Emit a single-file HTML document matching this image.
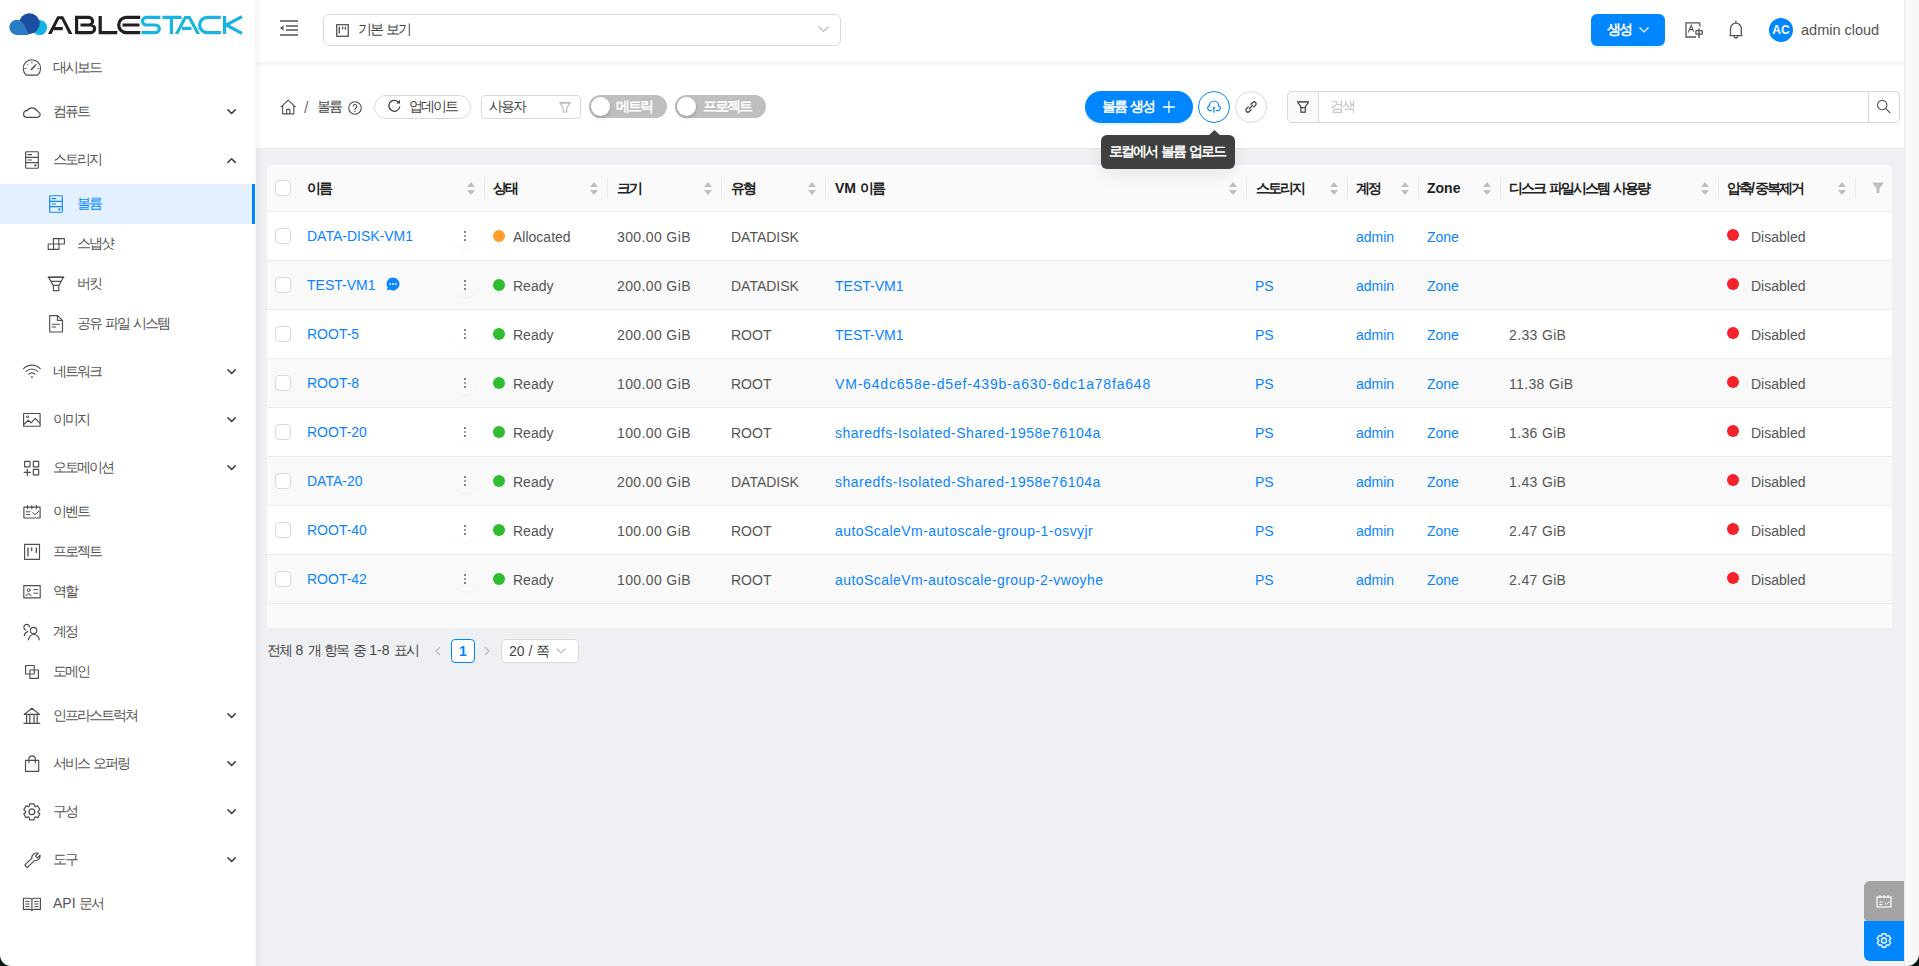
<!DOCTYPE html><html><head><meta charset="utf-8"><title>ABLESTACK</title><style>
*{box-sizing:border-box;margin:0;padding:0}
html,body{width:1919px;height:966px;overflow:hidden;background:#eff0f4;font-family:"Liberation Sans",sans-serif;font-size:14px;color:#333}
.a{position:absolute}
svg{display:block;position:absolute;overflow:visible}
.t{position:absolute;white-space:nowrap;line-height:16px}
.k{font-size:14px;letter-spacing:-2px}
</style></head><body>
<div class="a" style="left:0px;top:0px;width:256px;height:966px;background:#fff"></div>
<div class="a" style="left:256px;top:0px;width:1648px;height:62px;background:#fff"></div>
<div class="a" style="left:256px;top:62px;width:1648px;height:86px;background:#fff"></div>
<div class="a" style="left:256px;top:62px;width:1648px;height:6px;background:linear-gradient(rgba(0,10,30,.045),rgba(0,10,30,0))"></div>
<div class="a" style="left:255px;top:0px;width:8px;height:966px;background:linear-gradient(90deg,rgba(0,10,30,.04),rgba(0,10,30,0))"></div>
<div class="a" style="left:1904px;top:0px;width:15px;height:966px;background:#f8f8f8;border-left:1px solid #e8e8e8"></div>
<svg style="left:0px;top:0px" width="256" height="48" viewBox="0 0 256 48"><circle cx="39.6" cy="27.6" r="7.5" fill="#14b2e2"/><circle cx="29.4" cy="23.6" r="10.3" fill="#1d4d9e"/><path d="M16.5 35 A7.6 7.6 0 1 1 19.3 20.2 Q25.8 24.5 28.6 35 Z" fill="#2a7cc4"/><g fill="none" stroke="#231f20" stroke-width="3.2" stroke-linejoin="miter"><path d="M48 34 L57.3 16.2 H63.2 L72.4 34 H68.9 L61.4 19.3 H59.1 L51.5 34Z" fill="#231f20" stroke="none"/><path d="M54 28.6 H62.8"/><path d="M76.6 34 V17.4 H88.8 A3.8 3.8 0 0 1 88.8 25 H80.5 M76.6 32.6 H90.8 A3.8 3.8 0 0 0 90.8 25 H88"/><path d="M100.2 16 V32.6 H117.3"/><path d="M140.2 17.4 H126.3 A7.6 7.6 0 0 0 126.3 32.6 H140.2 M122.5 25 H139.5"/></g><g fill="none" stroke="#15b4e2" stroke-width="3.2" stroke-linejoin="miter"><path d="M160.4 17.4 H146.3 A3.8 3.8 0 0 0 146.3 25 H155.5 A3.8 3.8 0 0 1 155.5 32.6 H141.5"/><path d="M162.5 17.4 H181.5 M171.4 17.4 V34"/><path d="M174.8 34 L184.4 16 H190.3 L200 34 H196.5 L188.5 19.1 H186.2 L178.3 34Z" fill="#15b4e2" stroke="none"/><path d="M182 28.4 H191.5"/><path d="M220.8 17.4 H207.2 A7.6 7.6 0 0 0 207.2 32.6 H220.8"/><path d="M224.6 16 V34 M242 16.6 L226.2 25 L242 33.4"/></g></svg>
<div class="a" style="left:0px;top:184px;width:255px;height:40px;background:#e3f1ff"></div>
<div class="a" style="left:252px;top:184px;width:3px;height:40px;background:#0087ff"></div>
<div class="t " style="left:53px;top:59px;color:#555"><span class="k">대시보드</span></div>
<div class="t " style="left:53px;top:103px;color:#555"><span class="k">컴퓨트</span></div>
<svg style="left:227px;top:108.5px;" width="10" height="6" viewBox="0 0 10 6"><path d="M1 0.9 L4.6 4.5 L8.2 0.9" fill="none" stroke="#444" stroke-width="1.6" stroke-linecap="round" stroke-linejoin="round"/></svg>
<div class="t " style="left:53px;top:151px;color:#555"><span class="k">스토리지</span></div>
<svg style="left:227px;top:158px;" width="10" height="6" viewBox="0 0 10 6"><path d="M1 4.4 L4.6 0.8 L8.2 4.4" fill="none" stroke="#444" stroke-width="1.6" stroke-linecap="round" stroke-linejoin="round"/></svg>
<div class="t " style="left:77px;top:195px;color:#0087ff"><span class="k">볼륨</span></div>
<div class="t " style="left:77px;top:235px;color:#555"><span class="k">스냅샷</span></div>
<div class="t " style="left:77px;top:275px;color:#555"><span class="k">버킷</span></div>
<div class="t " style="left:77px;top:315px;color:#555"><span class="k">공유</span> <span class="k">파일</span> <span class="k">시스템</span></div>
<div class="t " style="left:53px;top:363px;color:#555"><span class="k">네트워크</span></div>
<svg style="left:227px;top:368.5px;" width="10" height="6" viewBox="0 0 10 6"><path d="M1 0.9 L4.6 4.5 L8.2 0.9" fill="none" stroke="#444" stroke-width="1.6" stroke-linecap="round" stroke-linejoin="round"/></svg>
<div class="t " style="left:53px;top:411px;color:#555"><span class="k">이미지</span></div>
<svg style="left:227px;top:416.5px;" width="10" height="6" viewBox="0 0 10 6"><path d="M1 0.9 L4.6 4.5 L8.2 0.9" fill="none" stroke="#444" stroke-width="1.6" stroke-linecap="round" stroke-linejoin="round"/></svg>
<div class="t " style="left:53px;top:459px;color:#555"><span class="k">오토메이션</span></div>
<svg style="left:227px;top:464.5px;" width="10" height="6" viewBox="0 0 10 6"><path d="M1 0.9 L4.6 4.5 L8.2 0.9" fill="none" stroke="#444" stroke-width="1.6" stroke-linecap="round" stroke-linejoin="round"/></svg>
<div class="t " style="left:53px;top:503px;color:#555"><span class="k">이벤트</span></div>
<div class="t " style="left:53px;top:543px;color:#555"><span class="k">프로젝트</span></div>
<div class="t " style="left:53px;top:583px;color:#555"><span class="k">역할</span></div>
<div class="t " style="left:53px;top:623px;color:#555"><span class="k">계정</span></div>
<div class="t " style="left:53px;top:663px;color:#555"><span class="k">도메인</span></div>
<div class="t " style="left:53px;top:707px;color:#555"><span class="k">인프라스트럭쳐</span></div>
<svg style="left:227px;top:712.5px;" width="10" height="6" viewBox="0 0 10 6"><path d="M1 0.9 L4.6 4.5 L8.2 0.9" fill="none" stroke="#444" stroke-width="1.6" stroke-linecap="round" stroke-linejoin="round"/></svg>
<div class="t " style="left:53px;top:755px;color:#555"><span class="k">서비스</span> <span class="k">오퍼링</span></div>
<svg style="left:227px;top:760.5px;" width="10" height="6" viewBox="0 0 10 6"><path d="M1 0.9 L4.6 4.5 L8.2 0.9" fill="none" stroke="#444" stroke-width="1.6" stroke-linecap="round" stroke-linejoin="round"/></svg>
<div class="t " style="left:53px;top:803px;color:#555"><span class="k">구성</span></div>
<svg style="left:227px;top:808.5px;" width="10" height="6" viewBox="0 0 10 6"><path d="M1 0.9 L4.6 4.5 L8.2 0.9" fill="none" stroke="#444" stroke-width="1.6" stroke-linecap="round" stroke-linejoin="round"/></svg>
<div class="t " style="left:53px;top:851px;color:#555"><span class="k">도구</span></div>
<svg style="left:227px;top:856.5px;" width="10" height="6" viewBox="0 0 10 6"><path d="M1 0.9 L4.6 4.5 L8.2 0.9" fill="none" stroke="#444" stroke-width="1.6" stroke-linecap="round" stroke-linejoin="round"/></svg>
<div class="t " style="left:53px;top:895px;color:#555">API <span class="k">문서</span></div>
<svg style="left:0;top:0" width="256" height="966" viewBox="0 0 256 966">
<g fill="none" stroke="#4d4d4d" stroke-width="1.15" stroke-linecap="round" stroke-linejoin="round">
 <!-- dashboard -->
 <path d="M26.3 75.1 A8.7 8.7 0 1 1 37.5 75.1 Z"/>
 <path d="M31.4 69.4 L35.4 65.3" stroke-width="1.5"/>
 <path d="M31.9 61.9 V63.1 M27.2 64.1 L28 64.9 M24.8 68.6 H26 M36.6 64.1 L35.8 64.9 M39 68.6 H37.8" stroke-width="0.9"/>
 <!-- cloud -->
 <path d="M26.2 117.3 H37.8 A2.8 2.8 0 0 0 38.6 112 A3.2 3.2 0 0 0 36.9 110.6 A5.6 5.6 0 0 0 27.2 110.6 A3.4 3.4 0 0 0 26.2 117.3 Z" stroke-width="1.2"/>
 <!-- storage -->
 <rect x="25.7" y="151.7" width="12.6" height="16.5" rx="0.6"/>
 <path d="M25.7 157.3 H38.3 M25.7 162.6 H38.3 M28 154.6 H31.6 M28 160 H31.6" />
 <circle cx="35.4" cy="165.4" r="0.55" fill="#4d4d4d"/>
 <!-- snapshot -->
 <path d="M48.2 244 H59 V249.4 H48.2 Z M53.6 244 V249.4 M53.4 244 V238.6 H64.4 V244 H59 M58.8 238.6 V244" stroke-width="1.1"/>
 <!-- bucket -->
 <path d="M48.4 277.2 H63.6 M48.8 277.6 L53.2 285.4 H59 L63.2 277.6 M50.8 281.4 H61.2 M53.4 285.4 V290.6 H58.8 V285.4" stroke-width="1.15"/>
 <path d="M48.4 277.2 H63.6" stroke-width="1.5"/>
 <!-- file -->
 <path d="M49.7 315.6 H57.6 L62.5 320.4 V332 H49.7 Z M57.4 315.8 V320.4 H62.4 M52.2 324.2 H59.6 M52.2 327 H55.6" stroke-width="1.15"/>
 <!-- wifi -->
 <path d="M23.6 368.6 A11.8 11.8 0 0 1 40.2 368.6 M26.2 371.4 A8 8 0 0 1 37.6 371.4 M28.8 374.2 A4.3 4.3 0 0 1 35 374.2" stroke-width="1.2"/>
 <circle cx="31.9" cy="377.1" r="0.95" fill="#4d4d4d" stroke="none"/>
 <!-- picture -->
 <rect x="23.6" y="413.5" width="16.5" height="12.7"/>
 <path d="M24 424.2 L28.4 420.2 L31 422.8 L35.2 418.4 L39.8 423.2" />
 <circle cx="27.5" cy="416.9" r="1" stroke-width="0.9"/>
 <!-- automation -->
 <rect x="24.6" y="461.4" width="5.4" height="5.4"/><rect x="33.3" y="461.4" width="5.4" height="5.4"/><rect x="33.3" y="469.4" width="5.4" height="5.4"/>
 <path d="M27.3 469.3 V475.3 M24.2 472.3 H30.4" stroke-width="1.3"/>
 <!-- event -->
 <rect x="23.9" y="507.1" width="16.2" height="10.9"/>
 <path d="M27.5 505.6 V508.6 M31.8 505.6 V508.6 M36.4 505.6 V508.6" stroke-width="1.2"/>
 <path d="M26.4 511.8 H30 M26.4 514.6 H30 M32.8 512.6 L34.9 514.8 L39 511.2" stroke-width="1"/>
 <!-- project -->
 <rect x="24.6" y="544.4" width="14.9" height="14.9"/>
 <path d="M28 547.8 V556 M31.7 547.8 V550.6 M36.3 547.8 V552.4" stroke-width="1.3"/>
 <!-- idcard -->
 <rect x="23.8" y="585.6" width="16.4" height="12.2"/>
 <circle cx="28.6" cy="590.2" r="1.5" stroke-width="1"/>
 <path d="M26 595.8 A2.7 2.7 0 0 1 31.2 595.8 M33.8 589.6 H37.6 M33.8 593.2 H37.6" stroke-width="1"/>
 <!-- team -->
 <circle cx="33.6" cy="630.6" r="3.2"/>
 <path d="M28.6 639.8 A5.2 5.2 0 0 1 39.2 639.8 M29.6 626.8 A2.9 2.9 0 1 0 25.6 630 M24.3 635.6 A4.8 4.8 0 0 1 27.6 631.6" stroke-width="1.2"/>
 <!-- domain -->
 <rect x="25.6" y="665.5" width="8.6" height="8.5"/>
 <rect x="29.9" y="670" width="8.5" height="8.4" />
 <!-- bank -->
 <path d="M24.2 714.4 L31.9 708.2 L39.6 714.4 Z M24 723.4 H39.8 M26.6 715.3 V722.6 M29.8 715.3 V722.6 M34 715.3 V722.6 M37.2 715.3 V722.6" stroke-width="1.2"/>
 <!-- shop -->
 <rect x="25.5" y="760.4" width="13.2" height="10.9"/>
 <path d="M28.9 763 V759 A3.2 3.2 0 0 1 35.3 759 V763" stroke-width="1.15"/>
 <!-- setting -->
 <path d="M34.57 817.37 L33.98 819.82 L29.72 819.82 L29.13 817.37 L28.39 816.94 L25.97 817.66 L23.84 813.96 L25.66 812.22 L25.66 811.38 L23.84 809.64 L25.97 805.94 L28.39 806.66 L29.13 806.23 L29.72 803.78 L33.98 803.78 L34.57 806.23 L35.31 806.66 L37.73 805.94 L39.86 809.64 L38.04 811.38 L38.04 812.22 L39.86 813.96 L37.73 817.66 L35.31 816.94 Z" stroke-width="1.2"/>
 <circle cx="31.85" cy="811.8" r="2.9" stroke-width="1.2"/>
 <!-- tool -->
 <path d="M24.8 865.2 L31.9 858.1 A4.6 4.6 0 0 1 38.2 853.4 L35.6 856 L37.4 857.8 L40 855.2 A4.6 4.6 0 0 1 34.4 860.6 L27.2 867.6 Z" stroke-width="1.15"/>
 <!-- read -->
 <path d="M23.4 898.2 H30.2 L31.9 899.4 L33.6 898.2 H40.4 V909.4 H33.6 L31.9 910.6 L30.2 909.4 H23.4 Z M31.9 899.4 V910" stroke-width="1.15"/>
 <path d="M25.6 901.4 H29.2 M25.6 904 H29.2 M25.6 906.6 H29.2 M34.6 901.4 H38.2 M34.6 904 H38.2 M34.6 906.6 H38.2" stroke-width="1"/>
</g>
<g fill="none" stroke="#1787f5" stroke-width="1.15" stroke-linecap="round" stroke-linejoin="round">
 <rect x="49.7" y="195.7" width="12.6" height="16.5" rx="0.6"/>
 <path d="M49.7 201.3 H62.3 M49.7 206.6 H62.3 M52 198.6 H55.6 M52 204 H55.6" />
 <circle cx="59.4" cy="209.4" r="0.55" fill="#1787f5"/>
</g>
</svg>
<svg style="left:280px;top:20px;" width="18" height="16" viewBox="0 0 18 16"><path d="M0 1h18M6 6h12M6 10h12M0 15h18" stroke="#555" stroke-width="1.7"/><path d="M0 8 L3.5 5.3 V10.7Z" fill="#555"/></svg>
<div class="a" style="left:323px;top:14px;width:518px;height:32px;background:#fff;border:1px solid #d9d9d9;border-radius:6px"></div>
<svg style="left:336px;top:24px;" width="13" height="13" viewBox="0 0 13 13"><rect x="0.7" y="0.7" width="11.6" height="11.6" fill="none" stroke="#555" stroke-width="1.3"/><path d="M3.3 2.8v6.8M6.6 2.8v2.4M9.4 2.8v3" stroke="#555" stroke-width="1.4"/></svg>
<div class="t " style="left:358px;top:21px;color:#444"><span class="k">기본</span> <span class="k">보기</span></div>
<svg style="left:818px;top:26px;" width="11" height="7" viewBox="0 0 11 7"><path d="M0.5 0.5 L5.5 5.5 L10.5 0.5" fill="none" stroke="#bbb" stroke-width="1.1"/></svg>
<div class="a" style="left:1591px;top:14px;width:74px;height:32px;background:#0087ff;border-radius:6px;box-shadow:0 2px 0 rgba(5,145,255,.1)"></div>
<div class="t " style="left:1607px;top:21px;color:#fff;font-weight:bold"><span class="k">생성</span></div>
<svg style="left:1639px;top:27px;" width="10" height="6" viewBox="0 0 10 6"><path d="M0.5 0.5 L5 5 L9.5 0.5" fill="none" stroke="#fff" stroke-width="1.2"/></svg>
<svg style="left:1680px;top:16px;" width="30" height="28" viewBox="0 0 30 28"><path d="M19.9 10.6 V7.4 Q19.9 6.9 19.4 6.9 H6 V21 H16" fill="none" stroke="#555" stroke-width="1.3"/><path d="M8.4 16.4 L11.2 9.2 L13.5 15.6 M9.6 13.6 H13" fill="none" stroke="#555" stroke-width="1.1"/><rect x="15.9" y="14.6" width="6.5" height="3.6" rx="0.6" fill="none" stroke="#555" stroke-width="1.3"/><path d="M19 12.4 V21.9" stroke="#555" stroke-width="1.4"/></svg>
<svg style="left:1720px;top:16px;" width="30" height="28" viewBox="0 0 30 28"><path d="M15.9 4.8 V7 M10.5 19.6 V12.6 A5.4 5.4 0 0 1 21.3 12.6 V19.6 M9.4 19.7 H22.5 M14.1 20.2 A1.8 1.8 0 0 0 17.7 20.2" fill="none" stroke="#555" stroke-width="1.3"/></svg>
<div class="a" style="left:1769px;top:18px;width:24px;height:24px;background:#0087ff;border-radius:50%"></div>
<div class="t " style="left:1769px;top:22px;color:#fff;font-size:12px;width:24px;text-align:center;font-weight:bold">AC</div>
<div class="t " style="left:1801px;top:22px;color:#555;font-size:14.5px">admin cloud</div>
<svg style="left:280px;top:99px;" width="17" height="16" viewBox="0 0 17 16"><path d="M0.8 8.2 L8.2 1.2 L15.6 8.2 M2.6 6.6V14.9h11.2V6.6 M6.6 14.8V10.3h3.2V14.8" fill="none" stroke="#555" stroke-width="1.15" stroke-linejoin="round"/></svg>
<div class="t " style="left:304px;top:99px;color:#777;font-size:16px;line-height:18px">/</div>
<div class="t " style="left:317px;top:98px;color:#444"><span class="k">볼륨</span></div>
<svg style="left:348px;top:101px;" width="14" height="14" viewBox="0 0 14 14"><circle cx="7" cy="7" r="6.3" fill="none" stroke="#444" stroke-width="1.05"/><path d="M5.1 5.4a1.9 1.9 0 1 1 2.5 1.8c-.45.2-.6.5-.6 1v.6" fill="none" stroke="#444" stroke-width="1.05"/><circle cx="7" cy="10.4" r=".6" fill="#444"/></svg>
<div class="a" style="left:374px;top:95px;width:97px;height:24px;background:#fff;border:1px solid #d9d9d9;border-radius:12px"></div>
<svg style="left:388px;top:99px;" width="13" height="14" viewBox="0 0 13 14"><path d="M11.8 7.5 A5.5 5.5 0 1 1 10.3 3" fill="none" stroke="#444" stroke-width="1.3"/><path d="M12 0.8 L12 4.6 L8.2 4.6Z" fill="#444"/></svg>
<div class="t " style="left:409px;top:98px;color:#444"><span class="k">업데이트</span></div>
<div class="a" style="left:481px;top:95px;width:100px;height:24px;background:#fff;border:1px solid #d9d9d9;border-radius:4px"></div>
<div class="t " style="left:489px;top:98px;color:#444"><span class="k">사용자</span></div>
<svg style="left:559px;top:101px;" width="12" height="12" viewBox="0 0 12 12"><path d="M0.8 1.5h10.4L7.7 7.5v3.5H4.3V7.5Z M1.5 2.2h9" fill="none" stroke="#bbb" stroke-width="1.2"/></svg>
<div class="a" style="left:589px;top:95px;width:78px;height:23px;background:#bfbfbf;border-radius:12px"></div>
<div class="a" style="left:591px;top:97px;width:19px;height:19px;background:#fff;border-radius:50%;box-shadow:0 2px 4px rgba(0,35,11,.2)"></div>
<div class="t " style="left:616px;top:98px;color:#fff;font-weight:bold"><span class="k">메트릭</span></div>
<div class="a" style="left:675px;top:95px;width:91px;height:23px;background:#bfbfbf;border-radius:12px"></div>
<div class="a" style="left:677px;top:97px;width:19px;height:19px;background:#fff;border-radius:50%;box-shadow:0 2px 4px rgba(0,35,11,.2)"></div>
<div class="t " style="left:703px;top:98px;color:#fff;font-weight:bold"><span class="k">프로젝트</span></div>
<div class="a" style="left:1085px;top:91px;width:108px;height:32px;background:#0087ff;border-radius:16px;box-shadow:0 2px 0 rgba(5,145,255,.1)"></div>
<div class="t " style="left:1102px;top:98px;color:#fff;font-weight:bold"><span class="k">볼륨</span> <span class="k">생성</span></div>
<svg style="left:1163px;top:101px;" width="12" height="12" viewBox="0 0 12 12"><path d="M6 0v12M0 6h12" stroke="#fff" stroke-width="1.3"/></svg>
<div class="a" style="left:1198px;top:91px;width:32px;height:32px;background:#fff;border:1px solid #0087ff;border-radius:50%"></div>
<svg style="left:1205px;top:99px;" width="18" height="16" viewBox="0 0 18 16"><path d="M6.4 11.6 H4.8 A2.6 2.6 0 0 1 4.4 6.6 A4.6 4.6 0 0 1 13.6 6.6 A2.6 2.6 0 0 1 13.2 11.6 H11.6" fill="none" stroke="#0087ff" stroke-width="1.2" stroke-linecap="round"/><path d="M9 13.8 V8.6" stroke="#0087ff" stroke-width="1.2"/><path d="M7.4 9.6 L9 7.6 L10.6 9.6Z" fill="#0087ff"/></svg>
<div class="a" style="left:1235px;top:91px;width:32px;height:32px;background:#fff;border:1px solid #d9d9d9;border-radius:50%"></div>
<svg style="left:1243px;top:99px;" width="16" height="16" viewBox="0 0 16 16"><g transform="rotate(-45 8 8)" fill="none" stroke="#444" stroke-width="1.25"><path d="M6.2 6 H3.6 A2 2 0 0 0 3.6 10 H6.2 M9.8 6 H12.4 A2 2 0 0 1 12.4 10 H9.8 M5.6 8 H10.4" stroke-linecap="round"/></g></svg>
<div class="a" style="left:1287px;top:91px;width:613px;height:32px;background:#fff;border:1px solid #d9d9d9;border-radius:5px"></div>
<div class="a" style="left:1287px;top:91px;width:32px;height:32px;background:#fafafa;border:1px solid #d9d9d9;border-radius:5px 0 0 5px"></div>
<svg style="left:1296px;top:100px;" width="14" height="14" viewBox="0 0 14 14"><path d="M1.3 1.9 H12.9" stroke="#444" stroke-width="1.5"/><path d="M1.6 2.2 L5.3 7.3 M12.6 2.2 L8.9 7.3" stroke="#444" stroke-width="1.15"/><rect x="4.9" y="7.6" width="4.4" height="4.6" fill="none" stroke="#444" stroke-width="1.2"/></svg>
<div class="t " style="left:1330px;top:98px;color:#bfbfbf"><span class="k">검색</span></div>
<div class="a" style="left:1868px;top:91px;width:32px;height:32px;background:#fff;border:1px solid #d9d9d9;border-radius:0 5px 5px 0"></div>
<svg style="left:1877px;top:99px;" width="14" height="14" viewBox="0 0 14 14"><circle cx="5.2" cy="6" r="4.7" fill="none" stroke="#555" stroke-width="1.15"/><path d="M8.6 9.4 L13.3 14.1" stroke="#555" stroke-width="1.2"/></svg>
<div class="a" style="left:256px;top:148px;width:1648px;height:1px;background:#e7e8eb"></div>
<div class="a" style="left:267px;top:165px;width:1625px;height:463px;background:#fafafa;border-radius:4px 4px 3px 3px"></div>
<div class="a" style="left:275px;top:180px;width:16px;height:16px;background:#fff;border:1px solid #d9d9d9;border-radius:4px"></div>
<div class="t " style="left:307px;top:180px;color:#222;font-weight:600"><span class="k">이름</span></div>
<svg style="left:467px;top:182px;" width="8" height="13" viewBox="0 0 8 13"><path d="M4 0 L8 5 H0Z M0 8 H8 L4 13Z" fill="#bfbfbf"/></svg>
<div class="a" style="left:484px;top:177px;width:1px;height:22px;background:#ececec"></div>
<div class="t " style="left:493px;top:180px;color:#222;font-weight:600"><span class="k">상태</span></div>
<svg style="left:590px;top:182px;" width="8" height="13" viewBox="0 0 8 13"><path d="M4 0 L8 5 H0Z M0 8 H8 L4 13Z" fill="#bfbfbf"/></svg>
<div class="a" style="left:607px;top:177px;width:1px;height:22px;background:#ececec"></div>
<div class="t " style="left:617px;top:180px;color:#222;font-weight:600"><span class="k">크기</span></div>
<svg style="left:704px;top:182px;" width="8" height="13" viewBox="0 0 8 13"><path d="M4 0 L8 5 H0Z M0 8 H8 L4 13Z" fill="#bfbfbf"/></svg>
<div class="a" style="left:721px;top:177px;width:1px;height:22px;background:#ececec"></div>
<div class="t " style="left:731px;top:180px;color:#222;font-weight:600"><span class="k">유형</span></div>
<svg style="left:808px;top:182px;" width="8" height="13" viewBox="0 0 8 13"><path d="M4 0 L8 5 H0Z M0 8 H8 L4 13Z" fill="#bfbfbf"/></svg>
<div class="a" style="left:825px;top:177px;width:1px;height:22px;background:#ececec"></div>
<div class="t " style="left:835px;top:180px;color:#222;font-weight:bold">VM <span class="k" style="font-weight:600">이름</span></div>
<svg style="left:1229px;top:182px;" width="8" height="13" viewBox="0 0 8 13"><path d="M4 0 L8 5 H0Z M0 8 H8 L4 13Z" fill="#bfbfbf"/></svg>
<div class="a" style="left:1246px;top:177px;width:1px;height:22px;background:#ececec"></div>
<div class="t " style="left:1256px;top:180px;color:#222;font-weight:600"><span class="k">스토리지</span></div>
<svg style="left:1330px;top:182px;" width="8" height="13" viewBox="0 0 8 13"><path d="M4 0 L8 5 H0Z M0 8 H8 L4 13Z" fill="#bfbfbf"/></svg>
<div class="a" style="left:1347px;top:177px;width:1px;height:22px;background:#ececec"></div>
<div class="t " style="left:1356px;top:180px;color:#222;font-weight:600"><span class="k">계정</span></div>
<svg style="left:1401px;top:182px;" width="8" height="13" viewBox="0 0 8 13"><path d="M4 0 L8 5 H0Z M0 8 H8 L4 13Z" fill="#bfbfbf"/></svg>
<div class="a" style="left:1418px;top:177px;width:1px;height:22px;background:#ececec"></div>
<div class="t " style="left:1427px;top:180px;color:#222;font-weight:bold">Zone</div>
<svg style="left:1483px;top:182px;" width="8" height="13" viewBox="0 0 8 13"><path d="M4 0 L8 5 H0Z M0 8 H8 L4 13Z" fill="#bfbfbf"/></svg>
<div class="a" style="left:1500px;top:177px;width:1px;height:22px;background:#ececec"></div>
<div class="t " style="left:1509px;top:180px;color:#222;font-weight:600"><span class="k">디스크</span> <span class="k">파일시스템</span> <span class="k">사용량</span></div>
<svg style="left:1701px;top:182px;" width="8" height="13" viewBox="0 0 8 13"><path d="M4 0 L8 5 H0Z M0 8 H8 L4 13Z" fill="#bfbfbf"/></svg>
<div class="a" style="left:1718px;top:177px;width:1px;height:22px;background:#ececec"></div>
<div class="t " style="left:1727px;top:180px;color:#222;font-weight:600"><span class="k">압축</span>/<span class="k">중복제거</span></div>
<svg style="left:1838px;top:182px;" width="8" height="13" viewBox="0 0 8 13"><path d="M4 0 L8 5 H0Z M0 8 H8 L4 13Z" fill="#bfbfbf"/></svg>
<div class="a" style="left:1855px;top:177px;width:1px;height:22px;background:#ececec"></div>
<svg style="left:1872px;top:182px;" width="12" height="12" viewBox="0 0 12 12"><path d="M0 0.5h12L7.5 6.5v4.5h-3V6.5Z" fill="#bfbfbf"/></svg>
<div class="a" style="left:267px;top:211px;width:1625px;height:1px;background:#ececec"></div>
<div class="a" style="left:267px;top:212px;width:1625px;height:48px;background:#fff"></div>
<div class="a" style="left:267px;top:260px;width:1625px;height:1px;background:#ececec"></div>
<div class="a" style="left:275px;top:228px;width:16px;height:16px;background:#fff;border:1px solid #d9d9d9;border-radius:4px"></div>
<div class="t " style="left:307px;top:227.5px;color:#0a84ff">DATA-DISK-VM1</div>
<div class="a" style="left:453px;top:224px;width:24px;height:24px;border-radius:50%;box-shadow:0 2px 0 rgba(0,0,0,.02)"></div>
<svg style="left:463px;top:231px;" width="4" height="10" viewBox="0 0 4 10"><rect x="1.1" y="0.1" width="1.8" height="1.8" fill="#666"/><rect x="1.1" y="4.1" width="1.8" height="1.8" fill="#8a8a8a"/><rect x="1.1" y="8.1" width="1.8" height="1.8" fill="#666"/></svg>
<div class="a" style="left:493px;top:230px;width:12px;height:12px;background:#ff9f2a;border-radius:50%"></div>
<div class="t " style="left:513px;top:229px;color:#555">Allocated</div>
<div class="t " style="left:617px;top:229px;color:#555;letter-spacing:0.38px">300.00 GiB</div>
<div class="t " style="left:731px;top:229px;color:#555">DATADISK</div>
<div class="t " style="left:1356px;top:229px;color:#0a84ff">admin</div>
<div class="t " style="left:1427px;top:229px;color:#0a84ff">Zone</div>
<div class="a" style="left:1727px;top:229px;width:12px;height:12px;background:#f5222d;border-radius:50%"></div>
<div class="t " style="left:1751px;top:229px;color:#555">Disabled</div>
<div class="a" style="left:267px;top:261px;width:1625px;height:48px;background:#f9f9f9"></div>
<div class="a" style="left:267px;top:309px;width:1625px;height:1px;background:#ececec"></div>
<div class="a" style="left:275px;top:277px;width:16px;height:16px;background:#fff;border:1px solid #d9d9d9;border-radius:4px"></div>
<div class="t " style="left:307px;top:276.5px;color:#0a84ff">TEST-VM1</div>
<svg style="left:386px;top:277px;" width="14" height="14" viewBox="0 0 14 14"><path d="M7 0.5a6.5 6.5 0 1 1 -3.3 12.1 L0.8 13.5 L1.6 10.5 A6.5 6.5 0 0 1 7 0.5z" fill="#0a84ff"/><circle cx="4.2" cy="7" r=".9" fill="#fff"/><circle cx="7" cy="7" r=".9" fill="#fff"/><circle cx="9.8" cy="7" r=".9" fill="#fff"/></svg>
<div class="a" style="left:453px;top:273px;width:24px;height:24px;border-radius:50%;box-shadow:0 2px 0 rgba(0,0,0,.02)"></div>
<svg style="left:463px;top:280px;" width="4" height="10" viewBox="0 0 4 10"><rect x="1.1" y="0.1" width="1.8" height="1.8" fill="#666"/><rect x="1.1" y="4.1" width="1.8" height="1.8" fill="#8a8a8a"/><rect x="1.1" y="8.1" width="1.8" height="1.8" fill="#666"/></svg>
<div class="a" style="left:493px;top:279px;width:12px;height:12px;background:#2ebd2e;border-radius:50%"></div>
<div class="t " style="left:513px;top:278px;color:#555">Ready</div>
<div class="t " style="left:617px;top:278px;color:#555;letter-spacing:0.38px">200.00 GiB</div>
<div class="t " style="left:731px;top:278px;color:#555">DATADISK</div>
<div class="t " style="left:835px;top:278px;color:#0a84ff">TEST-VM1</div>
<div class="t " style="left:1255px;top:278px;color:#0a84ff">PS</div>
<div class="t " style="left:1356px;top:278px;color:#0a84ff">admin</div>
<div class="t " style="left:1427px;top:278px;color:#0a84ff">Zone</div>
<div class="a" style="left:1727px;top:278px;width:12px;height:12px;background:#f5222d;border-radius:50%"></div>
<div class="t " style="left:1751px;top:278px;color:#555">Disabled</div>
<div class="a" style="left:267px;top:310px;width:1625px;height:48px;background:#fff"></div>
<div class="a" style="left:267px;top:358px;width:1625px;height:1px;background:#ececec"></div>
<div class="a" style="left:275px;top:326px;width:16px;height:16px;background:#fff;border:1px solid #d9d9d9;border-radius:4px"></div>
<div class="t " style="left:307px;top:325.5px;color:#0a84ff">ROOT-5</div>
<div class="a" style="left:453px;top:322px;width:24px;height:24px;border-radius:50%;box-shadow:0 2px 0 rgba(0,0,0,.02)"></div>
<svg style="left:463px;top:329px;" width="4" height="10" viewBox="0 0 4 10"><rect x="1.1" y="0.1" width="1.8" height="1.8" fill="#666"/><rect x="1.1" y="4.1" width="1.8" height="1.8" fill="#8a8a8a"/><rect x="1.1" y="8.1" width="1.8" height="1.8" fill="#666"/></svg>
<div class="a" style="left:493px;top:328px;width:12px;height:12px;background:#2ebd2e;border-radius:50%"></div>
<div class="t " style="left:513px;top:327px;color:#555">Ready</div>
<div class="t " style="left:617px;top:327px;color:#555;letter-spacing:0.38px">200.00 GiB</div>
<div class="t " style="left:731px;top:327px;color:#555">ROOT</div>
<div class="t " style="left:835px;top:327px;color:#0a84ff">TEST-VM1</div>
<div class="t " style="left:1255px;top:327px;color:#0a84ff">PS</div>
<div class="t " style="left:1356px;top:327px;color:#0a84ff">admin</div>
<div class="t " style="left:1427px;top:327px;color:#0a84ff">Zone</div>
<div class="t " style="left:1509px;top:327px;color:#555;letter-spacing:0.35px">2.33 GiB</div>
<div class="a" style="left:1727px;top:327px;width:12px;height:12px;background:#f5222d;border-radius:50%"></div>
<div class="t " style="left:1751px;top:327px;color:#555">Disabled</div>
<div class="a" style="left:267px;top:359px;width:1625px;height:48px;background:#f9f9f9"></div>
<div class="a" style="left:267px;top:407px;width:1625px;height:1px;background:#ececec"></div>
<div class="a" style="left:275px;top:375px;width:16px;height:16px;background:#fff;border:1px solid #d9d9d9;border-radius:4px"></div>
<div class="t " style="left:307px;top:374.5px;color:#0a84ff">ROOT-8</div>
<div class="a" style="left:453px;top:371px;width:24px;height:24px;border-radius:50%;box-shadow:0 2px 0 rgba(0,0,0,.02)"></div>
<svg style="left:463px;top:378px;" width="4" height="10" viewBox="0 0 4 10"><rect x="1.1" y="0.1" width="1.8" height="1.8" fill="#666"/><rect x="1.1" y="4.1" width="1.8" height="1.8" fill="#8a8a8a"/><rect x="1.1" y="8.1" width="1.8" height="1.8" fill="#666"/></svg>
<div class="a" style="left:493px;top:377px;width:12px;height:12px;background:#2ebd2e;border-radius:50%"></div>
<div class="t " style="left:513px;top:376px;color:#555">Ready</div>
<div class="t " style="left:617px;top:376px;color:#555;letter-spacing:0.38px">100.00 GiB</div>
<div class="t " style="left:731px;top:376px;color:#555">ROOT</div>
<div class="t " style="left:835px;top:376px;color:#0a84ff;letter-spacing:0.82px">VM-64dc658e-d5ef-439b-a630-6dc1a78fa648</div>
<div class="t " style="left:1255px;top:376px;color:#0a84ff">PS</div>
<div class="t " style="left:1356px;top:376px;color:#0a84ff">admin</div>
<div class="t " style="left:1427px;top:376px;color:#0a84ff">Zone</div>
<div class="t " style="left:1509px;top:376px;color:#555;letter-spacing:0.35px">11.38 GiB</div>
<div class="a" style="left:1727px;top:376px;width:12px;height:12px;background:#f5222d;border-radius:50%"></div>
<div class="t " style="left:1751px;top:376px;color:#555">Disabled</div>
<div class="a" style="left:267px;top:408px;width:1625px;height:48px;background:#fff"></div>
<div class="a" style="left:267px;top:456px;width:1625px;height:1px;background:#ececec"></div>
<div class="a" style="left:275px;top:424px;width:16px;height:16px;background:#fff;border:1px solid #d9d9d9;border-radius:4px"></div>
<div class="t " style="left:307px;top:423.5px;color:#0a84ff">ROOT-20</div>
<div class="a" style="left:453px;top:420px;width:24px;height:24px;border-radius:50%;box-shadow:0 2px 0 rgba(0,0,0,.02)"></div>
<svg style="left:463px;top:427px;" width="4" height="10" viewBox="0 0 4 10"><rect x="1.1" y="0.1" width="1.8" height="1.8" fill="#666"/><rect x="1.1" y="4.1" width="1.8" height="1.8" fill="#8a8a8a"/><rect x="1.1" y="8.1" width="1.8" height="1.8" fill="#666"/></svg>
<div class="a" style="left:493px;top:426px;width:12px;height:12px;background:#2ebd2e;border-radius:50%"></div>
<div class="t " style="left:513px;top:425px;color:#555">Ready</div>
<div class="t " style="left:617px;top:425px;color:#555;letter-spacing:0.38px">100.00 GiB</div>
<div class="t " style="left:731px;top:425px;color:#555">ROOT</div>
<div class="t " style="left:835px;top:425px;color:#0a84ff;letter-spacing:0.51px">sharedfs-Isolated-Shared-1958e76104a</div>
<div class="t " style="left:1255px;top:425px;color:#0a84ff">PS</div>
<div class="t " style="left:1356px;top:425px;color:#0a84ff">admin</div>
<div class="t " style="left:1427px;top:425px;color:#0a84ff">Zone</div>
<div class="t " style="left:1509px;top:425px;color:#555;letter-spacing:0.35px">1.36 GiB</div>
<div class="a" style="left:1727px;top:425px;width:12px;height:12px;background:#f5222d;border-radius:50%"></div>
<div class="t " style="left:1751px;top:425px;color:#555">Disabled</div>
<div class="a" style="left:267px;top:457px;width:1625px;height:48px;background:#f9f9f9"></div>
<div class="a" style="left:267px;top:505px;width:1625px;height:1px;background:#ececec"></div>
<div class="a" style="left:275px;top:473px;width:16px;height:16px;background:#fff;border:1px solid #d9d9d9;border-radius:4px"></div>
<div class="t " style="left:307px;top:472.5px;color:#0a84ff">DATA-20</div>
<div class="a" style="left:453px;top:469px;width:24px;height:24px;border-radius:50%;box-shadow:0 2px 0 rgba(0,0,0,.02)"></div>
<svg style="left:463px;top:476px;" width="4" height="10" viewBox="0 0 4 10"><rect x="1.1" y="0.1" width="1.8" height="1.8" fill="#666"/><rect x="1.1" y="4.1" width="1.8" height="1.8" fill="#8a8a8a"/><rect x="1.1" y="8.1" width="1.8" height="1.8" fill="#666"/></svg>
<div class="a" style="left:493px;top:475px;width:12px;height:12px;background:#2ebd2e;border-radius:50%"></div>
<div class="t " style="left:513px;top:474px;color:#555">Ready</div>
<div class="t " style="left:617px;top:474px;color:#555;letter-spacing:0.38px">200.00 GiB</div>
<div class="t " style="left:731px;top:474px;color:#555">DATADISK</div>
<div class="t " style="left:835px;top:474px;color:#0a84ff;letter-spacing:0.51px">sharedfs-Isolated-Shared-1958e76104a</div>
<div class="t " style="left:1255px;top:474px;color:#0a84ff">PS</div>
<div class="t " style="left:1356px;top:474px;color:#0a84ff">admin</div>
<div class="t " style="left:1427px;top:474px;color:#0a84ff">Zone</div>
<div class="t " style="left:1509px;top:474px;color:#555;letter-spacing:0.35px">1.43 GiB</div>
<div class="a" style="left:1727px;top:474px;width:12px;height:12px;background:#f5222d;border-radius:50%"></div>
<div class="t " style="left:1751px;top:474px;color:#555">Disabled</div>
<div class="a" style="left:267px;top:506px;width:1625px;height:48px;background:#fff"></div>
<div class="a" style="left:267px;top:554px;width:1625px;height:1px;background:#ececec"></div>
<div class="a" style="left:275px;top:522px;width:16px;height:16px;background:#fff;border:1px solid #d9d9d9;border-radius:4px"></div>
<div class="t " style="left:307px;top:521.5px;color:#0a84ff">ROOT-40</div>
<div class="a" style="left:453px;top:518px;width:24px;height:24px;border-radius:50%;box-shadow:0 2px 0 rgba(0,0,0,.02)"></div>
<svg style="left:463px;top:525px;" width="4" height="10" viewBox="0 0 4 10"><rect x="1.1" y="0.1" width="1.8" height="1.8" fill="#666"/><rect x="1.1" y="4.1" width="1.8" height="1.8" fill="#8a8a8a"/><rect x="1.1" y="8.1" width="1.8" height="1.8" fill="#666"/></svg>
<div class="a" style="left:493px;top:524px;width:12px;height:12px;background:#2ebd2e;border-radius:50%"></div>
<div class="t " style="left:513px;top:523px;color:#555">Ready</div>
<div class="t " style="left:617px;top:523px;color:#555;letter-spacing:0.38px">100.00 GiB</div>
<div class="t " style="left:731px;top:523px;color:#555">ROOT</div>
<div class="t " style="left:835px;top:523px;color:#0a84ff;letter-spacing:0.45px">autoScaleVm-autoscale-group-1-osvyjr</div>
<div class="t " style="left:1255px;top:523px;color:#0a84ff">PS</div>
<div class="t " style="left:1356px;top:523px;color:#0a84ff">admin</div>
<div class="t " style="left:1427px;top:523px;color:#0a84ff">Zone</div>
<div class="t " style="left:1509px;top:523px;color:#555;letter-spacing:0.35px">2.47 GiB</div>
<div class="a" style="left:1727px;top:523px;width:12px;height:12px;background:#f5222d;border-radius:50%"></div>
<div class="t " style="left:1751px;top:523px;color:#555">Disabled</div>
<div class="a" style="left:267px;top:555px;width:1625px;height:48px;background:#f9f9f9"></div>
<div class="a" style="left:267px;top:603px;width:1625px;height:1px;background:#ececec"></div>
<div class="a" style="left:275px;top:571px;width:16px;height:16px;background:#fff;border:1px solid #d9d9d9;border-radius:4px"></div>
<div class="t " style="left:307px;top:570.5px;color:#0a84ff">ROOT-42</div>
<div class="a" style="left:453px;top:567px;width:24px;height:24px;border-radius:50%;box-shadow:0 2px 0 rgba(0,0,0,.02)"></div>
<svg style="left:463px;top:574px;" width="4" height="10" viewBox="0 0 4 10"><rect x="1.1" y="0.1" width="1.8" height="1.8" fill="#666"/><rect x="1.1" y="4.1" width="1.8" height="1.8" fill="#8a8a8a"/><rect x="1.1" y="8.1" width="1.8" height="1.8" fill="#666"/></svg>
<div class="a" style="left:493px;top:573px;width:12px;height:12px;background:#2ebd2e;border-radius:50%"></div>
<div class="t " style="left:513px;top:572px;color:#555">Ready</div>
<div class="t " style="left:617px;top:572px;color:#555;letter-spacing:0.38px">100.00 GiB</div>
<div class="t " style="left:731px;top:572px;color:#555">ROOT</div>
<div class="t " style="left:835px;top:572px;color:#0a84ff;letter-spacing:0.43px">autoScaleVm-autoscale-group-2-vwoyhe</div>
<div class="t " style="left:1255px;top:572px;color:#0a84ff">PS</div>
<div class="t " style="left:1356px;top:572px;color:#0a84ff">admin</div>
<div class="t " style="left:1427px;top:572px;color:#0a84ff">Zone</div>
<div class="t " style="left:1509px;top:572px;color:#555;letter-spacing:0.35px">2.47 GiB</div>
<div class="a" style="left:1727px;top:572px;width:12px;height:12px;background:#f5222d;border-radius:50%"></div>
<div class="t " style="left:1751px;top:572px;color:#555">Disabled</div>
<div class="a" style="left:1101px;top:135px;width:134px;height:34px;background:#404040;border-radius:6px;box-shadow:0 6px 16px rgba(0,0,0,.08)"></div>
<svg style="left:1208px;top:130px;" width="13" height="6" viewBox="0 0 13 6"><path d="M0 6 L6.5 0 L13 6Z" fill="#404040"/></svg>
<div class="t " style="left:1109px;top:143px;color:#fff;font-weight:600"><span class="k">로컬에서</span> <span class="k">볼륨</span> <span class="k">업로드</span></div>
<div class="t " style="left:267px;top:642px;color:#444;word-spacing:0.6px"><span class="k">전체</span> 8 <span class="k">개</span> <span class="k">항목</span> <span class="k">중</span> 1-8 <span class="k">표시</span></div>
<svg style="left:434px;top:646px;" width="8" height="10" viewBox="0 0 8 10"><path d="M6 1 L2 5 L6 9" fill="none" stroke="#bbb" stroke-width="1.2"/></svg>
<div class="a" style="left:451px;top:639px;width:24px;height:24px;background:#fff;border:1px solid #0087ff;border-radius:4px"></div>
<div class="t " style="left:451px;top:643px;color:#0087ff;width:24px;text-align:center;font-weight:bold">1</div>
<svg style="left:483px;top:646px;" width="8" height="10" viewBox="0 0 8 10"><path d="M2 1 L6 5 L2 9" fill="none" stroke="#bbb" stroke-width="1.2"/></svg>
<div class="a" style="left:501px;top:639px;width:78px;height:24px;background:#fff;border:1px solid #d9d9d9;border-radius:4px"></div>
<div class="t " style="left:509px;top:643px;color:#444">20 / <span class="k">쪽</span></div>
<svg style="left:556px;top:648px;" width="10" height="6" viewBox="0 0 10 6"><path d="M0.5 0.5 L5 5 L9.5 0.5" fill="none" stroke="#bbb" stroke-width="1.1"/></svg>
<div class="a" style="left:1864px;top:881px;width:40px;height:40px;background:#a3a3a3;border-radius:6px 0 0 4px"></div>
<svg style="left:1876px;top:895px;" width="16" height="12" viewBox="0 0 16 12"><rect x="1" y="2" width="14" height="10" fill="none" stroke="#fff" stroke-width="1.2"/><path d="M4 0v3M8 0v3M12 0v3M3.5 7h3M3.5 9.5h3M9 8l1.5 1.5 3-3" fill="none" stroke="#fff" stroke-width="1"/></svg>
<div class="a" style="left:1864px;top:921px;width:40px;height:40px;background:#0087ff;border-radius:0 0 0 6px"></div>
<svg style="left:1876px;top:932px;" width="16" height="17" viewBox="0 0 16 17"><path d="M10.33 13.26 L9.80 15.26 L6.20 15.26 L5.67 13.26 L5.04 12.90 L3.04 13.44 L1.24 10.32 L2.71 8.86 L2.71 8.14 L1.24 6.68 L3.04 3.56 L5.04 4.10 L5.67 3.74 L6.20 1.74 L9.80 1.74 L10.33 3.74 L10.96 4.10 L12.96 3.56 L14.76 6.68 L13.29 8.14 L13.29 8.86 L14.76 10.32 L12.96 13.44 L10.96 12.90 Z" fill="none" stroke="#fff" stroke-width="1.3"/><circle cx="8" cy="8.5" r="2.5" fill="none" stroke="#fff" stroke-width="1.3"/></svg>
<svg style="left:0;top:955px" width="11" height="11" viewBox="0 0 11 11"><path d="M0 0 A11 11 0 0 0 11 11 H0Z" fill="#0b1510"/></svg>
<svg style="left:1907px;top:954px" width="12" height="12" viewBox="0 0 12 12"><path d="M12 0 A12 12 0 0 1 0 12 H12Z" fill="#0b1510"/></svg>
</body></html>
